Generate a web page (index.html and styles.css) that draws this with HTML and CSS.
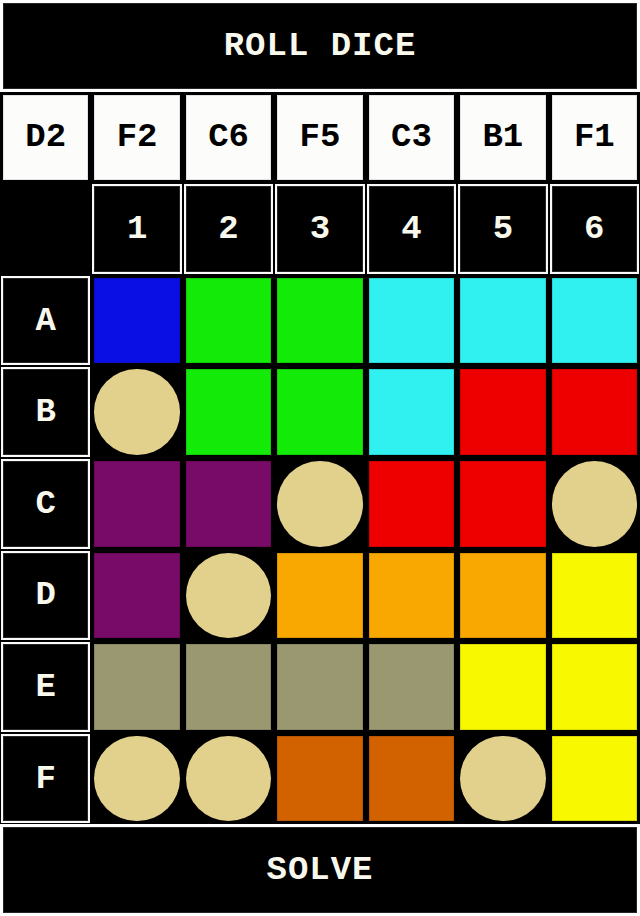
FILE: index.html
```html
<html lang="en">
  <head>
    <title>dice</title>
    <meta charset="utf-8">
    <link rel="stylesheet" href="styles.css">
  </head>
  <body>
<div id="plateau"></div>
<script>
var des = ["D2", "F2", "C6", "F5", "C3", "B1", "F1"];
var lignes = ["A", "B", "C", "D", "E", "F"];
var grille = [
  "bleu vert vert cyan cyan cyan",
  "pion vert vert cyan rouge rouge",
  "violet violet pion rouge rouge pion",
  "violet pion orange orange orange jaune",
  "olive olive olive olive jaune jaune",
  "pion pion brun brun pion jaune"
];
var t = '<div class="barre"><div class="bouton">ROLL DICE</div></div>';
for (var i = 0; i < des.length; i++) {
  t += '<div class="case"><div class="de">' + des[i] + '</div></div>';
}
t += '<div class="case"><div class="vide"></div></div>';
for (var i = 1; i <= 6; i++) {
  t += '<div class="case"><div class="etiquette">' + i + '</div></div>';
}
for (var l = 0; l < lignes.length; l++) {
  t += '<div class="case"><div class="etiquette">' + lignes[l] + '</div></div>';
  var cases = grille[l].split(" ");
  for (var k = 0; k < cases.length; k++) {
    t += '<div class="case"><div class="piece ' + cases[k] + '"></div></div>';
  }
}
t += '<div class="barre"><div class="bouton">SOLVE</div></div>';
document.getElementById("plateau").innerHTML = t;
</script>
  </body>
</html>
```

FILE: styles.css
```css
body {
	margin: 0;
	background-color: black;
	font-family: "Liberation Mono", "DejaVu Sans Mono", monospace;
	font-weight: bold;
	font-size: 34px;
}
#plateau {
	display: grid;
	grid-template-columns: repeat(7, 1fr);
	grid-template-rows: repeat(10, 1fr);
	height: 916px;
}
.case { padding: 3px; min-width: 0; }
.barre {
	grid-column: 1 / 8;
	padding: 3px;
	background-color: white;
}
.bouton, .de, .etiquette, .vide, .piece {
	height: 100%;
	box-sizing: border-box;
	display: flex;
	align-items: center;
	justify-content: center;
}
.bouton { background-color: black; color: #f8f8ec; border: 1px solid #262626; letter-spacing: 1px; }
.de { background-color: #fcfcfa; color: black; border: 1px solid #e2e2e6; }
.etiquette {
	background-color: black;
	color: #f8f8ec;
	border: 1px solid #262626;
	box-shadow: 0 0 0 2px #fafafa;
}
.vide { background-color: black; }
.piece { border: 1px solid rgba(0,0,0,0.12); }
.pion { background-color: #e2d18c; border-radius: 50%; border: none; }
.bleu { background-color: #0a10e4; }
.vert { background-color: #14ea08; }
.cyan { background-color: #30f0f0; }
.rouge { background-color: #ee0000; }
.violet { background-color: #780a68; }
.orange { background-color: #f8a800; }
.jaune { background-color: #f8f800; }
.olive { background-color: #9a9870; }
.brun { background-color: #d26200; }
```
